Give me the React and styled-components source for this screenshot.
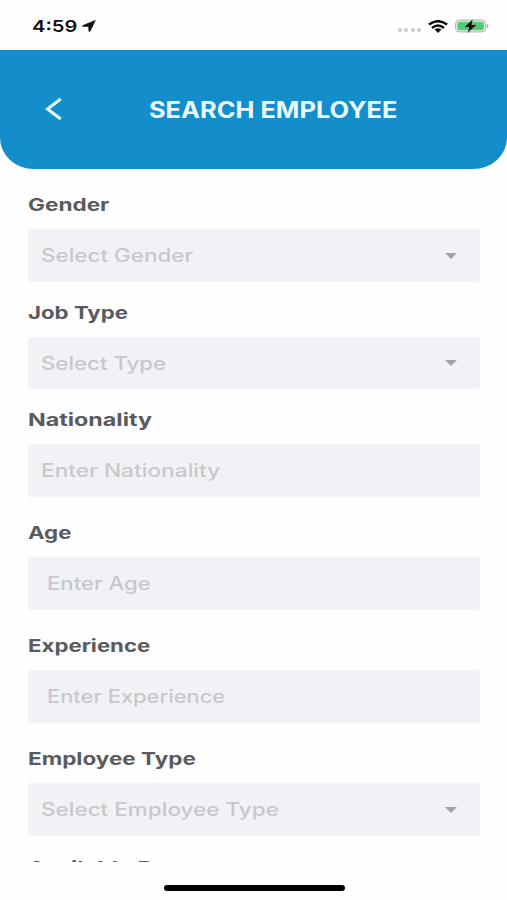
import React from 'react';
import styled, { createGlobalStyle } from 'styled-components';

const GlobalStyle = createGlobalStyle`
    * {
        box-sizing: border-box;
    }
    body {
        margin: 0;
        background: #fefefe;
        font-family: 'Inter', 'Liberation Sans', sans-serif;
    }
`;
const Screen = styled.div`
    width: 507px;
    height: 900px;
    display: flex;
    flex-flow: column nowrap;
    background: #fefefe;
    overflow: hidden;
`;
const StatusBar = styled.div`
    height: 49.5px;
    flex-shrink: 0;
    padding: 3px 18px 0 32px;
    display: flex;
    align-items: center;
    justify-content: space-between;
`;
const StatusGroup = styled.div`
    display: flex;
    align-items: center;
`;
// wide lettering, anchored on its left edge
const Wide = styled.span`
    display: inline-block;
    white-space: pre;
    transform: scaleX(${props => props.$x || 1.2});
    transform-origin: left center;
`;
const Time = styled.div`
    width: 50px;
    font-size: 16.5px;
    font-weight: 600;
    line-height: 20px;
    color: #111;
`;
const Dots = styled.div`
    display: flex;
    gap: 2.4px;
    margin: 8px 7px 0 0;
`;
const Dot = styled.span`
    width: 4px;
    height: 4px;
    border-radius: 50%;
    background: #c9c9c9;
`;
const BatterySlot = styled.div`
    display: flex;
    margin-left: 7px;
`;
const Header = styled.header`
    height: 119.5px;
    flex-shrink: 0;
    padding-left: 45px;
    display: flex;
    align-items: center;
    background: #148ecb;
    border-radius: 0 0 34px 34px / 0 0 31px 31px;
`;
const BackButton = styled.button`
    width: 18px;
    height: 24px;
    margin-right: 86px;
    padding: 0;
    border: 0;
    background: none;
    display: flex;
`;
const Title = styled.h1`
    margin: 0;
    padding-top: 1px;
    font-size: 22.5px;
    font-weight: 700;
    line-height: 28px;
    color: #e9fbff;
`;
const Form = styled.main`
    height: 693px;
    flex-shrink: 0;
    padding: 26px 27px 0 28px;
    overflow: hidden;
`;
const Field = styled.div`
    margin-bottom: ${props => props.$gap}px;
`;
const Label = styled.div`
    height: 20px;
    margin-bottom: 14px;
    font-size: 17.5px;
    font-weight: 700;
    line-height: 20px;
    color: #5a5b5d;
`;
const Box = styled.div`
    height: 52.5px;
    padding: 0 23px 0 ${props => props.$indent}px;
    display: flex;
    align-items: center;
    justify-content: space-between;
    border-radius: 4px;
    background: #f1f2f6;
`;
const Placeholder = styled.div`
    padding-top: ${props => (props.$low ? 2 : 1)}px;
    font-size: 18px;
    font-weight: 450;
    line-height: 24px;
    color: #c7c8cb;
`;
const Caret = styled.span`
    margin-top: 1px;
    border: 6.5px solid transparent;
    border-top: 6px solid #a2a3a7;
    border-bottom: 0;
`;
const HomeArea = styled.footer`
    flex: 1;
    padding-top: 23px;
    display: flex;
    justify-content: center;
`;
const HomeBar = styled.div`
    width: 181px;
    height: 6px;
    margin-left: 1px;
    border-radius: 3px;
    background: #000;
`;

const fields = [
    { label: 'Gender', labelX: 1.29, hint: 'Select Gender', hintX: 1.245, select: true, indent: 13, gap: 21 },
    { label: 'Job Type', labelX: 1.27, hint: 'Select Type', hintX: 1.235, select: true, indent: 13, gap: 21 },
    { label: 'Nationality', labelX: 1.33, hint: 'Enter Nationality', hintX: 1.26, indent: 13, gap: 26.5 },
    { label: 'Age', labelX: 1.27, hint: 'Enter Age', hintX: 1.23, indent: 19, gap: 26.5 },
    { label: 'Experience', labelX: 1.27, hint: 'Enter Experience', hintX: 1.215, indent: 19, gap: 26.5 },
    { label: 'Employee Type', labelX: 1.285, hint: 'Select Employee Type', hintX: 1.25, select: true, indent: 13, gap: 22 },
];

function LocationArrow() {
    return (
        <svg width="14" height="12" viewBox="0 0 14 12">
            <path d="M13.3 0.4 L0.7 5.6 Q0.3 6.3 1 6.4 L6.6 6.6 L6.9 11.2 Q7.5 11.9 8.1 11.2 Z" fill="#111" stroke="#111" strokeWidth="0.6" />
        </svg>
    );
}

function Wifi() {
    return (
        <svg width="20" height="13" viewBox="0 0 20 13">
            <g fill="none" stroke="#111" strokeWidth="2.5">
                <path d="M0.9 4.6 Q10 -2.2 19.1 4.6" />
                <path d="M4 7.9 Q10 3.1 16 7.9" />
            </g>
            <path d="M6.6 9.6 Q10 7.1 13.4 9.6 L10 12.9 Z" fill="#111" />
        </svg>
    );
}

function Battery() {
    return (
        <svg width="34" height="14" viewBox="0 0 34 14">
            <rect x="0.6" y="1.1" width="30" height="11.8" rx="3.6" fill="#e4f3e7" stroke="#aab0ab" />
            <rect x="2.4" y="2.7" width="26.4" height="8.6" rx="2.2" fill="#55cb75" />
            <path d="M31.8 5 Q33.5 5.4 33.5 7 Q33.5 8.6 31.8 9 Z" fill="#a4a7a5" />
            <path d="M17.8 0.2 L9 8.2 L14 8.2 L12.5 13.9 L22 5.7 L16.8 5.7 Z" fill="#111" stroke="#d5f5dd" strokeWidth="0.3" />
        </svg>
    );
}

function App() {
    return (
        <>
            <GlobalStyle />
            <Screen>
                <StatusBar>
                    <StatusGroup>
                        <Time><Wide $x={1.22}>4:59</Wide></Time>
                        <LocationArrow />
                    </StatusGroup>
                    <StatusGroup>
                        <Dots>
                            {[0, 1, 2, 3].map(i => <Dot key={i} />)}
                        </Dots>
                        <Wifi />
                        <BatterySlot>
                            <Battery />
                        </BatterySlot>
                    </StatusGroup>
                </StatusBar>
                <Header>
                    <BackButton aria-label="Back">
                        <svg width="18" height="24" viewBox="0 0 18 24">
                            <path d="M15.7 2 L2.5 12 L15.7 22" fill="none" stroke="#e9fbff" strokeWidth="3" />
                        </svg>
                    </BackButton>
                    <Title><Wide $x={1.128}>SEARCH EMPLOYEE</Wide></Title>
                </Header>
                <Form>
                    {fields.map(field => (
                        <Field key={field.label} $gap={field.gap}>
                            <Label><Wide $x={field.labelX}>{field.label}</Wide></Label>
                            <Box $indent={field.indent}>
                                <Placeholder $low={field.select}><Wide $x={field.hintX}>{field.hint}</Wide></Placeholder>
                                {field.select && <Caret />}
                            </Box>
                        </Field>
                    ))}
                    <Label><Wide $x={1.33}>Available Days</Wide></Label>
                </Form>
                <HomeArea>
                    <HomeBar />
                </HomeArea>
            </Screen>
        </>
    );
}

export default App;
